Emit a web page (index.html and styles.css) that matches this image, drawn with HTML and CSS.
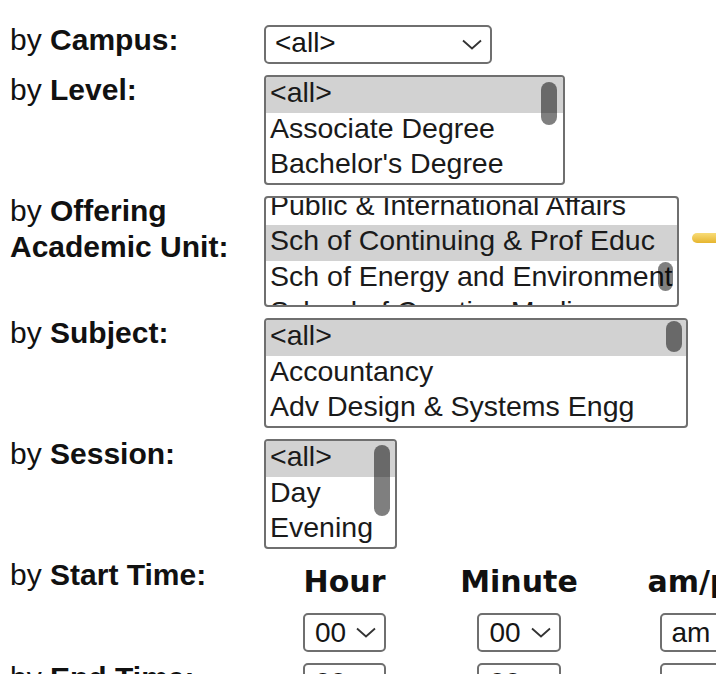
FILE: index.html
```
<!DOCTYPE html>
<html lang="en">
<head>
    <meta charset="UTF-8">
    <meta name="viewport" content="width=device-width, initial-scale=1.0">
    <title>Class Search</title>
    <link rel="stylesheet" href="styles.css">
</head>
<body>
    <div class="form">
        <div class="row">
            <div class="lbl">by <b>Campus:</b></div>
            <div class="drop campus">
                <span>&lt;all&gt;</span>
                <svg class="chev" width="20" height="11" viewBox="0 0 20 11"><polyline points="1,1.5 10,9.5 19,1.5"/></svg>
            </div>
        </div>

        <div class="row">
            <div class="lbl">by <b>Level:</b></div>
            <div class="list level">
                <div class="opt sel">&lt;all&gt;</div>
                <div class="opt">Associate Degree</div>
                <div class="opt">Bachelor's Degree</div>
                <div class="thumb"></div>
            </div>
        </div>

        <div class="row">
            <div class="lbl">by <b>Offering<br>Academic Unit:</b></div>
            <div class="list unit">
                <div class="scrolled">
                    <div class="opt">Public &amp; International Affairs</div>
                    <div class="opt sel">Sch of Continuing &amp; Prof Educ</div>
                    <div class="opt">Sch of Energy and Environment</div>
                    <div class="opt">School of Creative Media</div>
                </div>
                <div class="thumb"></div>
            </div>
        </div>

        <div class="row">
            <div class="lbl">by <b>Subject:</b></div>
            <div class="list subject">
                <div class="opt sel">&lt;all&gt;</div>
                <div class="opt">Accountancy</div>
                <div class="opt">Adv Design &amp; Systems Engg</div>
                <div class="thumb"></div>
            </div>
        </div>

        <div class="row">
            <div class="lbl">by <b>Session:</b></div>
            <div class="list session">
                <div class="opt sel">&lt;all&gt;</div>
                <div class="opt">Day</div>
                <div class="opt">Evening</div>
                <div class="thumb"></div>
            </div>
        </div>

        <div class="row">
            <div class="lbl">by <b>Start Time:</b></div>
            <div class="times">
                <div class="th">Hour</div>
                <div class="th">Minute</div>
                <div class="th">am/pm</div>
                <div class="tc"><div class="drop small"><span>00</span><svg class="chev" width="20" height="11" viewBox="0 0 20 11"><polyline points="1,1.5 10,9.5 19,1.5"/></svg></div></div>
                <div class="tc"><div class="drop small"><span>00</span><svg class="chev" width="20" height="11" viewBox="0 0 20 11"><polyline points="1,1.5 10,9.5 19,1.5"/></svg></div></div>
                <div class="tc"><div class="drop small"><span>am</span><svg class="chev" width="20" height="11" viewBox="0 0 20 11"><polyline points="1,1.5 10,9.5 19,1.5"/></svg></div></div>
            </div>
        </div>

        <div class="row">
            <div class="lbl">by <b>End Time:</b></div>
            <div class="times">
                <div class="tc"><div class="drop small"><span>00</span><svg class="chev" width="20" height="11" viewBox="0 0 20 11"><polyline points="1,1.5 10,9.5 19,1.5"/></svg></div></div>
                <div class="tc"><div class="drop small"><span>00</span><svg class="chev" width="20" height="11" viewBox="0 0 20 11"><polyline points="1,1.5 10,9.5 19,1.5"/></svg></div></div>
                <div class="tc"><div class="drop small"><span>pm</span><svg class="chev" width="20" height="11" viewBox="0 0 20 11"><polyline points="1,1.5 10,9.5 19,1.5"/></svg></div></div>
            </div>
        </div>
    </div>

    <!-- pointer highlight from the screen recording -->
    <div class="pointer"></div>
</body>
</html>
```
FILE: styles.css
```
body {
    margin: 0;
    background: #fff;
    font-family: "Liberation Sans", Arial, sans-serif;
    color: #151515;
    overflow: hidden;
}

.form {
    padding: 25px 0 0 10px;
    display: flex;
    flex-direction: column;
    gap: 11px;
}

.row {
    display: flex;
    align-items: flex-start;
}

.lbl {
    width: 254px;
    flex-shrink: 0;
    font-size: 30px;
    line-height: 36px;
    margin-top: -3px;
    color: #111;
}

/* drop-down selects */
.drop {
    display: flex;
    align-items: center;
    justify-content: space-between;
    height: 39px;
    box-sizing: border-box;
    border: 2px solid #6f6f6f;
    border-radius: 5px;
    font-size: 28px;
    line-height: 31px;
    background: #fff;
    white-space: nowrap;
}

.drop.campus {
    width: 228px;
    padding: 0 8px 4px 9px;
}

.drop.campus .chev {
    margin-top: 4px;
}

.drop.small {
    display: inline-flex;
    gap: 10px;
    padding: 0 8px 0 10px;
}

.chev {
    flex-shrink: 0;
}

.chev polyline {
    fill: none;
    stroke: #333;
    stroke-width: 1.8;
}

/* list boxes */
.list {
    position: relative;
    height: 110px;
    box-sizing: border-box;
    border: 2px solid #6f6f6f;
    border-radius: 4px;
    overflow: hidden;
    font-size: 28.5px;
    white-space: nowrap;
}

.list.level { width: 301px; }
.list.unit { width: 415px; height: 111px; }
.list.subject { width: 424px; }
.list.session { width: 133px; }

.scrolled {
    margin-top: -8.5px;
}

.opt {
    height: 35.5px;
    box-sizing: border-box;
    line-height: 31px;
    padding: 0 0 0 4px;
    color: #1a1a1a;
}

.opt.sel {
    background: #d2d2d2;
}

.thumb {
    position: absolute;
    width: 16px;
    border-radius: 8px;
    background: rgba(0, 0, 0, 0.5);
}

.level .thumb { right: 6px; top: 5px; height: 43px; }
.unit .thumb { right: 4px; top: 64px; height: 29px; width: 15px; }
.subject .thumb { right: 4px; top: 1px; height: 31px; }
.session .thumb { right: 5px; top: 4px; height: 71px; }

/* time pickers */
.times {
    display: grid;
    grid-template-columns: 161px 188px 184px;
}

.th {
    font-family: "DejaVu Sans", Verdana, sans-serif;
    font-weight: bold;
    font-size: 30px;
    line-height: 36px;
    margin-top: 4px;
    text-align: center;
    color: #111;
    white-space: nowrap;
}

.tc {
    text-align: center;
}

.th + .th + .th + .tc,
.th + .th + .th + .tc + .tc,
.th + .th + .th + .tc + .tc + .tc {
    margin-top: 13px;
}

.pointer {
    position: absolute;
    left: 692px;
    top: 233px;
    width: 40px;
    height: 10px;
    border-radius: 5px;
    background: linear-gradient(#f8dc78, #e6b52e);
}
```
